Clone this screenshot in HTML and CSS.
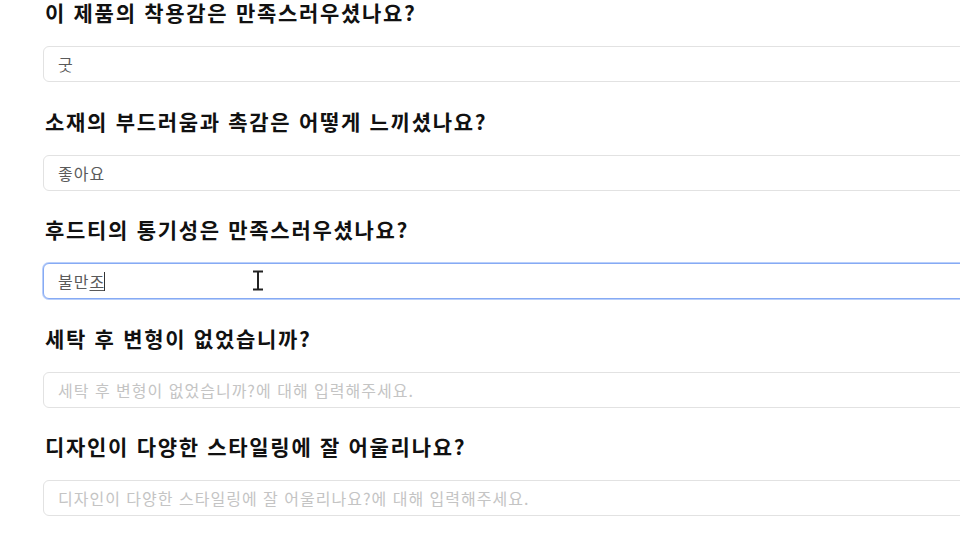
FILE: index.html
```html
<!DOCTYPE html>
<html lang="ko">
<head>
<meta charset="utf-8">
<link rel="stylesheet" href="styles.css">
</head>
<body>
<form class="survey">
  <div class="item">
    <label class="question">이 제품의 착용감은 만족스러우셨나요?</label>
    <input class="field" type="text" value="굿">
  </div>
  <div class="item">
    <label class="question">소재의 부드러움과 촉감은 어떻게 느끼셨나요?</label>
    <input class="field" type="text" value="좋아요">
  </div>
  <div class="item">
    <label class="question">후드티의 통기성은 만족스러우셨나요?</label>
    <div class="field field-focus">불만<span class="composing">조</span><span class="caret"></span>
      <svg class="ibeam" width="12" height="21" viewBox="0 0 12 21"><path d="M1 1.5h10M1 19.5h10M6 1.5v18" fill="none" stroke="#222" stroke-width="2"/></svg>
    </div>
  </div>
  <div class="item">
    <label class="question">세탁 후 변형이 없었습니까?</label>
    <input class="field" type="text" placeholder="세탁 후 변형이 없었습니까?에 대해 입력해주세요.">
  </div>
  <div class="item">
    <label class="question">디자인이 다양한 스타일링에 잘 어울리나요?</label>
    <input class="field" type="text" placeholder="디자인이 다양한 스타일링에 잘 어울리나요?에 대해 입력해주세요.">
  </div>
</form>
</body>
</html>
```

FILE: styles.css
```css
html, body {
  margin: 0;
  padding: 0;
  background: #ffffff;
  overflow: hidden;
  width: 960px;
  height: 540px;
}

body {
  font-family: "Noto Sans CJK KR", "Noto Sans", sans-serif;
}

.survey {
  display: flex;
  flex-direction: column;
  gap: 23.5px;
  width: 1020px;
  margin: -3px 0 0 43px;
}

.item {
  display: flex;
  flex-direction: column;
  gap: 19px;
}

.question {
  display: block;
  font-size: 21px;
  font-weight: 700;
  line-height: 30px;
  letter-spacing: 1.7px;
  color: #111;
  padding-left: 2px;
}

.field {
  box-sizing: border-box;
  display: block;
  width: 100%;
  height: 36px;
  margin: 0;
  padding: 0 14px;
  border: 1px solid #e2e2e2;
  border-radius: 6px;
  background: #fff;
  font-family: "Noto Sans CJK KR", "Noto Sans", sans-serif;
  font-size: 16px;
  letter-spacing: 1px;
  color: #5a5a5a;
  outline: none;
}

.field::placeholder {
  color: #c4c4c4;
}

.field-focus {
  position: relative;
  display: flex;
  align-items: center;
  border: 1px solid #86aaf4;
  box-shadow: 0 0 0 1px #b9cffa;
  line-height: 22px;
}

.composing {
  text-decoration: underline;
  text-underline-offset: 2px;
  text-decoration-thickness: 1px;
  letter-spacing: 0;
}

.caret {
  display: inline-block;
  width: 1px;
  height: 19px;
  background: #333;
  margin-left: 0;
}

.ibeam {
  position: absolute;
  left: 208px;
  top: 6px;
}
```
